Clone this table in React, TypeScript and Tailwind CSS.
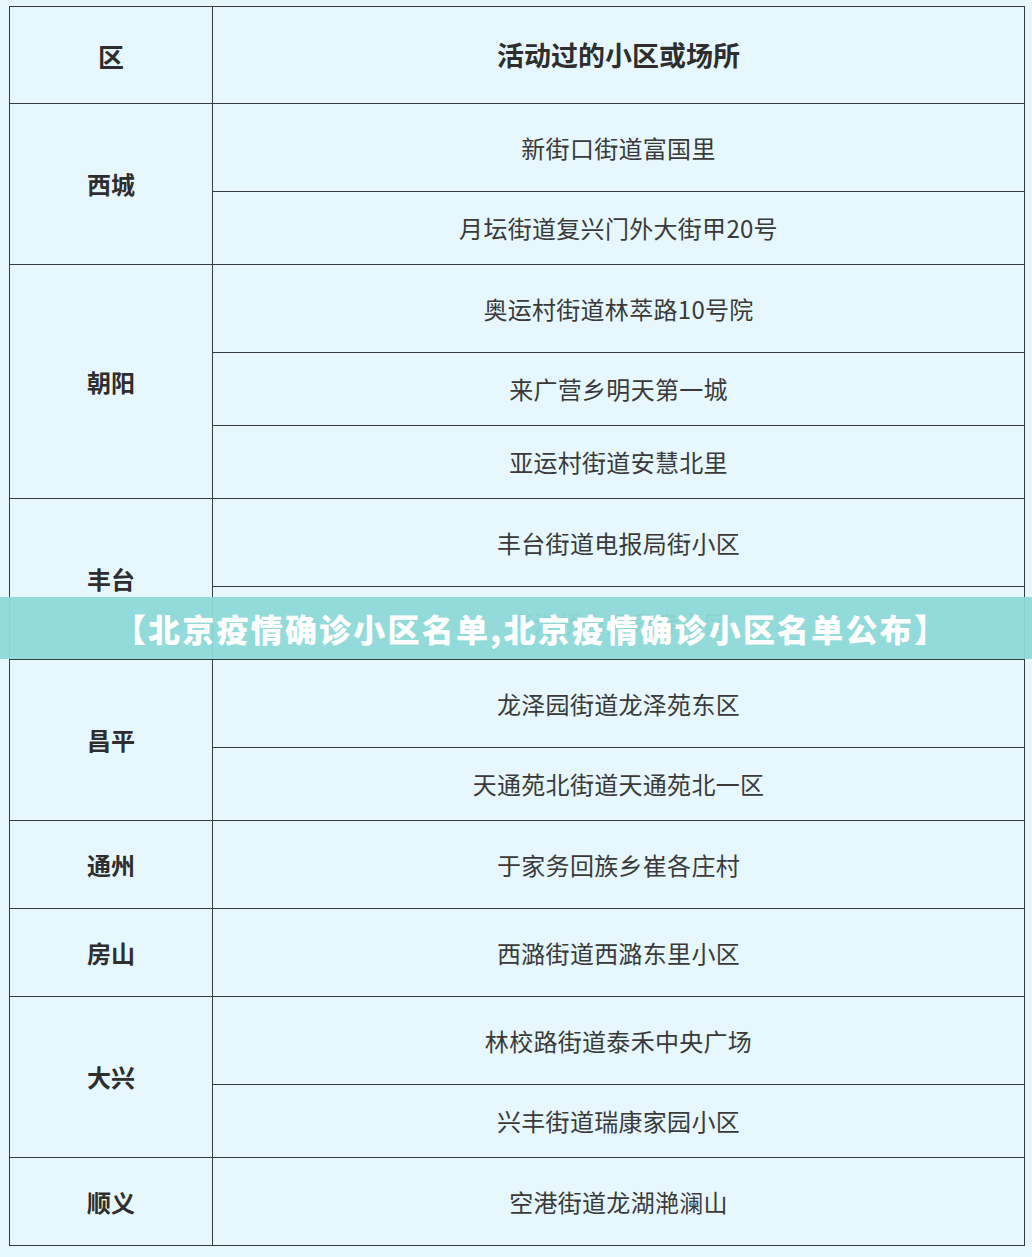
const rows: { area: string; places: { name: string; h: string }[] }[] = [
  {
    area: "西城",
    places: [
      { name: "新街口街道富国里", h: "h-[88px]" },
      { name: "月坛街道复兴门外大街甲20号", h: "h-[73px]" },
    ],
  },
  {
    area: "朝阳",
    places: [
      { name: "奥运村街道林萃路10号院", h: "h-[88px]" },
      { name: "来广营乡明天第一城", h: "h-[73px]" },
      { name: "亚运村街道安慧北里", h: "h-[73px]" },
    ],
  },
  {
    area: "丰台",
    places: [
      { name: "丰台街道电报局街小区", h: "h-[88px]" },
      { name: "卢沟桥乡万泉寺小区", h: "h-[73px]" },
    ],
  },
  {
    area: "昌平",
    places: [
      { name: "龙泽园街道龙泽苑东区", h: "h-[88px]" },
      { name: "天通苑北街道天通苑北一区", h: "h-[73px]" },
    ],
  },
  { area: "通州", places: [{ name: "于家务回族乡崔各庄村", h: "h-[88px]" }] },
  { area: "房山", places: [{ name: "西潞街道西潞东里小区", h: "h-[88px]" }] },
  {
    area: "大兴",
    places: [
      { name: "林校路街道泰禾中央广场", h: "h-[88px]" },
      { name: "兴丰街道瑞康家园小区", h: "h-[73px]" },
    ],
  },
  { area: "顺义", places: [{ name: "空港街道龙湖滟澜山", h: "h-[88px]" }] },
];

export default function App() {
  return (
    <div
      className="relative w-[1032px] h-[1257px] bg-[#e6f8fe] pt-[6px] pl-[9px]"
      style={{ fontFamily: '"Noto Sans CJK SC", "Noto Sans", sans-serif' }}
    >
      <table className="w-[1015px] border-collapse table-fixed">
        <colgroup>
          <col className="w-[203px]" />
          <col className="w-[812px]" />
        </colgroup>
        <tbody>
          <tr className="h-[97px]">
            <th className="border border-[#363b40] text-[26px] font-bold text-[#2e2e2e] text-center">区</th>
            <th className="border border-[#363b40] text-[27px] font-bold text-[#2e2e2e] text-center">
              活动过的小区或场所
            </th>
          </tr>
          {rows.map((r) =>
            r.places.map((p, i) => (
              <tr key={r.area + i} className={p.h}>
                {i === 0 && (
                  <td
                    rowSpan={r.places.length}
                    className="border border-[#363b40] text-center text-[24px] font-bold text-[#2e2e2e]"
                  >
                    {r.area}
                  </td>
                )}
                <td className="border border-[#363b40] text-center text-[24px] tracking-[0.3px] text-[#3a3a3a]">
                  {p.name}
                </td>
              </tr>
            ))
          )}
        </tbody>
      </table>

      <div className="absolute left-0 right-0 top-[597px] h-[62px] bg-[#8ed9d8]/95 flex items-center justify-center pl-[30px]">
        <span className="text-[32px] font-black tracking-[2.2px] text-white leading-none">
          【北京疫情确诊小区名单,北京疫情确诊小区名单公布】
        </span>
      </div>
    </div>
  );
}
